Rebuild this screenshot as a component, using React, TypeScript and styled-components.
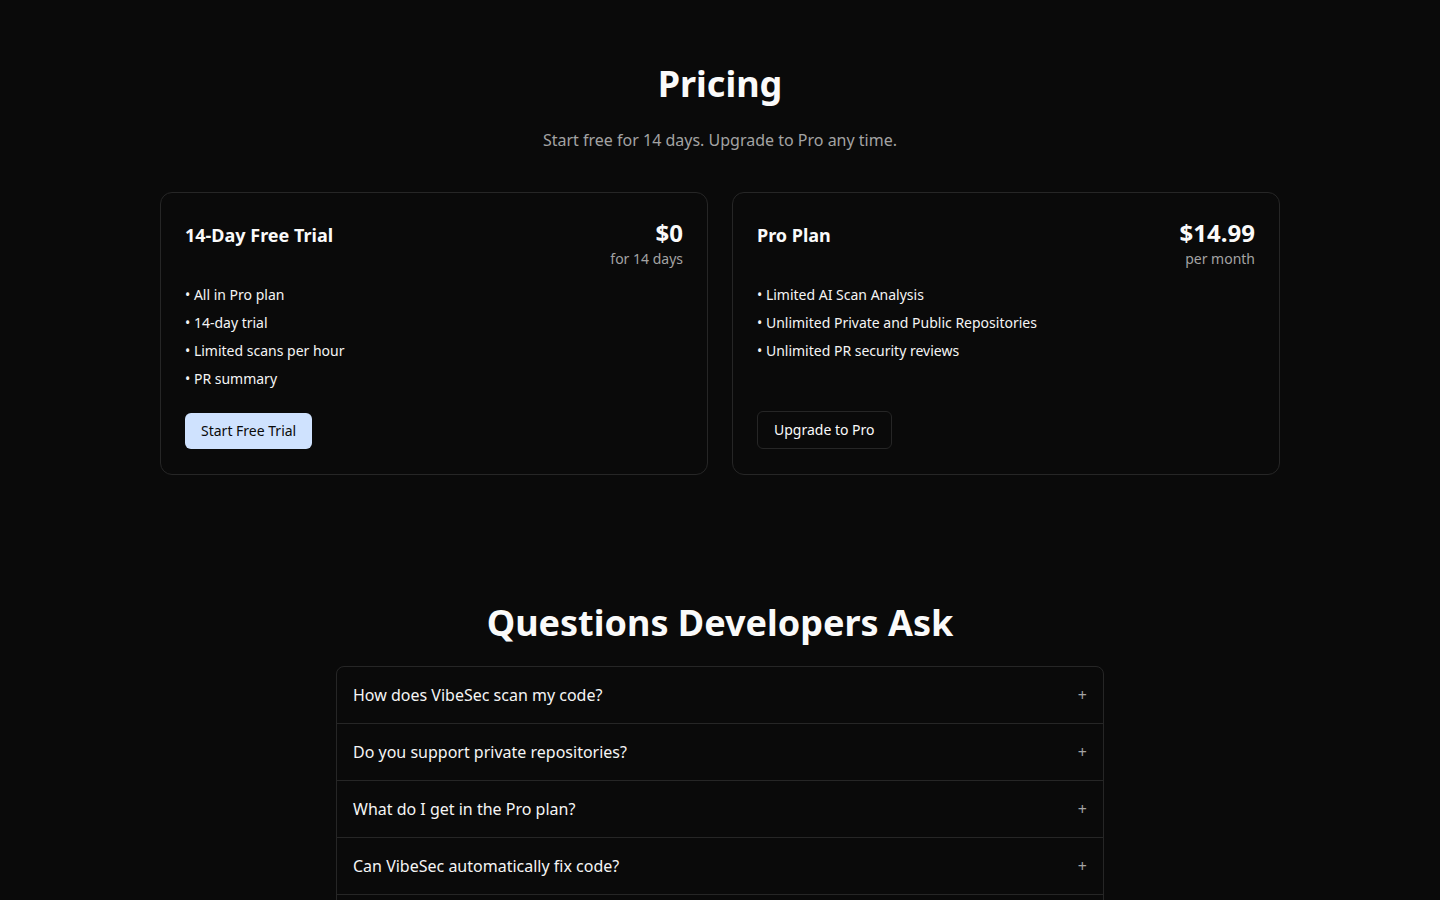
import React, { FC } from 'react';
import styled, { createGlobalStyle } from 'styled-components';

const GlobalStyle = createGlobalStyle`
  * { box-sizing: border-box; }
  html, body {
    margin: 0;
    padding: 0;
    background: #0a0a0a;
    color: #fafafa;
    font-family: 'Noto Sans', 'Open Sans', sans-serif;
  }
`;

type Plan = {
  name: string;
  price: string;
  period: string;
  features: string[];
  cta: string;
  primary?: boolean;
};

const plans: Plan[] = [
  {
    name: '14-Day Free Trial',
    price: '$0',
    period: 'for 14 days',
    features: ['All in Pro plan', '14-day trial', 'Limited scans per hour', 'PR summary'],
    cta: 'Start Free Trial',
    primary: true,
  },
  {
    name: 'Pro Plan',
    price: '$14.99',
    period: 'per month',
    features: [
      'Limited AI Scan Analysis',
      'Unlimited Private and Public Repositories',
      'Unlimited PR security reviews',
    ],
    cta: 'Upgrade to Pro',
  },
];

const questions = [
  'How does VibeSec scan my code?',
  'Do you support private repositories?',
  'What do I get in the Pro plan?',
  'Can VibeSec automatically fix code?',
  'Is my code stored anywhere?',
];

const Section = styled.section`
  padding: 64px 0;
  display: flex;
  flex-direction: column;
  align-items: center;
`;

const Title = styled.h2`
  margin: 0;
  font-size: 36px;
  line-height: 40px;
  font-weight: 700;
  text-align: center;
`;

const Subtitle = styled.p`
  margin: 24px 0 0;
  font-size: 16px;
  line-height: 24px;
  color: #a3a3a3;
`;

const CardGrid = styled.div`
  margin-top: 40px;
  width: 1120px;
  display: grid;
  grid-template-columns: 1fr 1fr;
  gap: 24px;
`;

const Card = styled.div`
  border: 1px solid #262626;
  border-radius: 12px;
  padding: 24px 24px 25px;
  display: flex;
  flex-direction: column;
`;

const CardHead = styled.div`
  display: flex;
  justify-content: space-between;
  align-items: flex-start;
`;

const PlanName = styled.h3`
  margin: 4px 0 0;
  font-size: 18px;
  line-height: 28px;
  font-weight: 700;
`;

const PriceBlock = styled.div`
  text-align: right;
`;

const Price = styled.div`
  font-size: 24px;
  line-height: 32px;
  font-weight: 700;
`;

const Period = styled.div`
  font-size: 14px;
  line-height: 20px;
  color: #a3a3a3;
`;

const Features = styled.ul`
  list-style: none;
  margin: 16px 0 0;
  padding: 0;
  display: flex;
  flex-direction: column;
  gap: 8px;
`;

const Feature = styled.li`
  font-size: 14px;
  line-height: 20px;
  color: #f5f5f5;
`;

const CtaRow = styled.div`
  margin-top: auto;
  padding-top: 24px;
`;

const Button = styled.button<{ $primary?: boolean }>`
  font-family: inherit;
  font-size: 14px;
  line-height: 20px;
  height: ${(p) => (p.$primary ? '36px' : '38px')};
  padding: 0 16px;
  border-radius: 6px;
  cursor: pointer;
  border: ${(p) => (p.$primary ? 'none' : '1px solid #262626')};
  background: ${(p) => (p.$primary ? '#cfe2fe' : '#0a0a0a')};
  color: ${(p) => (p.$primary ? '#0a0a0a' : '#fafafa')};
`;

const Faq = styled.div`
  margin-top: 23px;
  width: 768px;
  border: 1px solid #262626;
  border-radius: 8px;
  overflow: hidden;
`;

const FaqRow = styled.div`
  height: 57px;
  padding: 0 16px;
  display: flex;
  align-items: center;
  justify-content: space-between;
  border-bottom: 1px solid #262626;
  font-size: 16px;
  color: #f5f5f5;
`;

const Plus = styled.span`
  font-size: 16px;
  color: #a3a3a3;
`;

const PlanCard: FC<{ plan: Plan }> = ({ plan }) => (
  <Card>
    <CardHead>
      <PlanName>{plan.name}</PlanName>
      <PriceBlock>
        <Price>{plan.price}</Price>
        <Period>{plan.period}</Period>
      </PriceBlock>
    </CardHead>
    <Features>
      {plan.features.map((f) => (
        <Feature key={f}>• {f}</Feature>
      ))}
    </Features>
    <CtaRow>
      <Button $primary={plan.primary}>{plan.cta}</Button>
    </CtaRow>
  </Card>
);

export default function App() {
  return (
    <>
      <GlobalStyle />
      <Section>
        <Title>Pricing</Title>
        <Subtitle>Start free for 14 days. Upgrade to Pro any time.</Subtitle>
        <CardGrid>
          {plans.map((p) => (
            <PlanCard key={p.name} plan={p} />
          ))}
        </CardGrid>
      </Section>
      <Section>
        <Title>Questions Developers Ask</Title>
        <Faq>
          {questions.map((q) => (
            <FaqRow key={q}>
              {q}
              <Plus>+</Plus>
            </FaqRow>
          ))}
        </Faq>
      </Section>
    </>
  );
}
